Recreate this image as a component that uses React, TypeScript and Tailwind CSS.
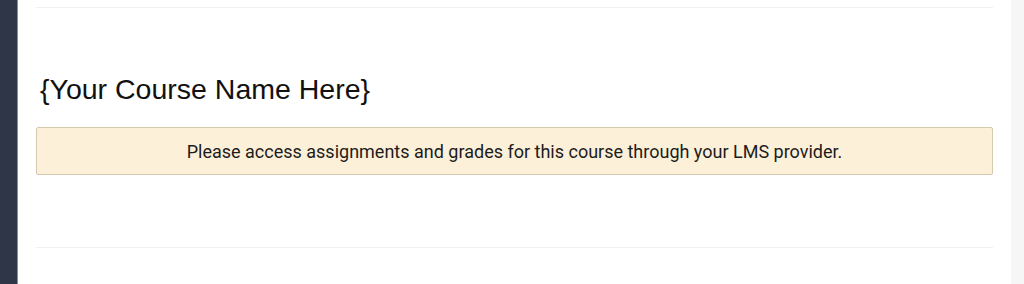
export default function App() {
  return (
    <div className="flex h-[284px] w-full overflow-hidden bg-white">
      <div className="w-[17px] shrink-0 bg-[#2e3647]" />
      <div className="w-px shrink-0 bg-[#8a8f99]" />
      <main className="flex-1 px-[18px]">
        <div className="mt-[7px] border-t border-[#f0f0f0]" />
        <h1 className="mt-[65px] pl-1 font-['Liberation_Sans',Arial,sans-serif] text-[28.5px] leading-[32px] text-[#111]">
          {"{Your Course Name Here}"}
        </h1>
        <div className="mt-[22px] flex h-[48px] items-center justify-center rounded-[2px] border border-[#d5c9b0] bg-[#fcf0d9] font-['Roboto',sans-serif] text-[18px] text-[#1c1c1c]">
          Please access assignments and grades for this course through your LMS provider.
        </div>
        <div className="mt-[72px] border-t border-[#f0f0f0]" />
      </main>
      <div className="w-[13px] shrink-0 bg-[#f6f6f6]" />
    </div>
  );
}
